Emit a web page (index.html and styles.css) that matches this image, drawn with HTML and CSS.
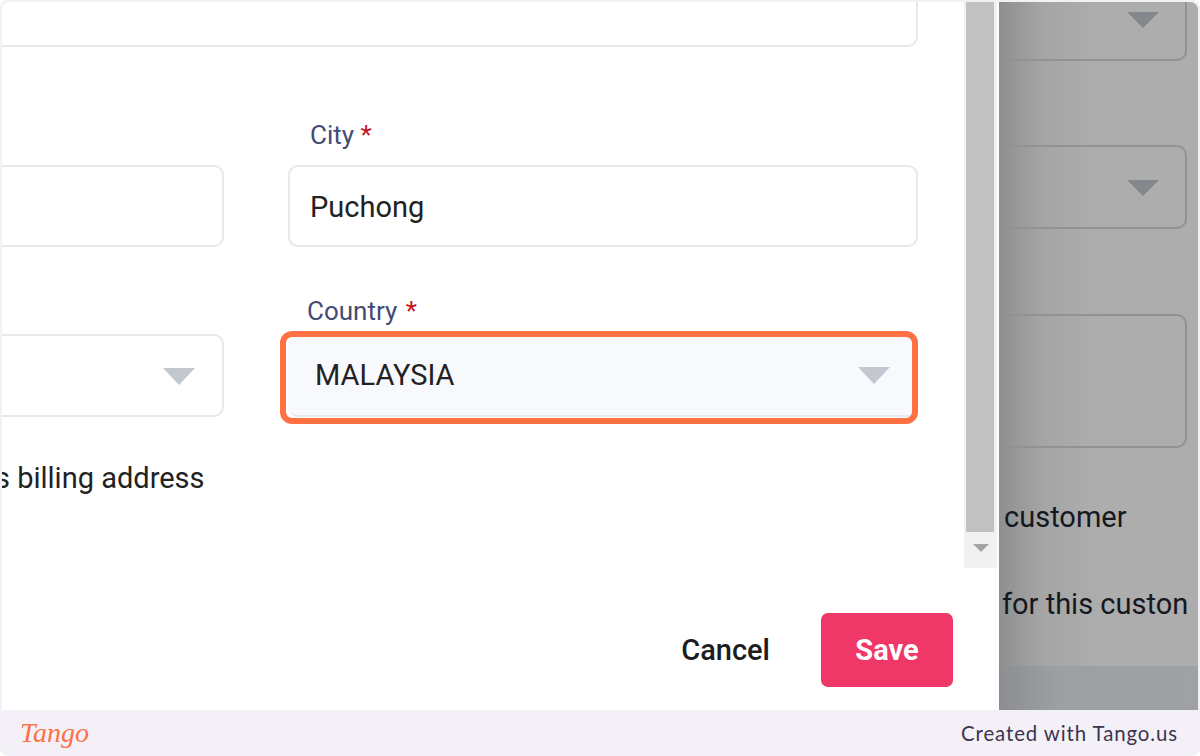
FILE: index.html
```html
<!DOCTYPE html>
<html lang="en">

<head>
    <meta charset="UTF-8">
    <meta name="viewport" content="width=device-width, initial-scale=1.0">
    <title>Edit address</title>
    <link rel="stylesheet" href="styles.css">
</head>

<body>
    <div class="shot">
        <div class="stage">
            <div class="modal">
                <div class="modal-body">
                    <div class="form">
                        <div class="input input-top"></div>

                        <div class="form-row row-city">
                            <div class="input input-cut"></div>
                            <div class="field">
                                <label class="field-label label-city">City <span class="req">*</span></label>
                                <div class="input">Puchong</div>
                            </div>
                        </div>

                        <div class="form-row row-country">
                            <div class="select select-cut"><span class="arrow"></span></div>
                            <div class="field">
                                <label class="field-label label-country">Country <span class="req">*</span></label>
                                <div class="select select-active">
                                    <span>MALAYSIA</span>
                                    <span class="arrow"></span>
                                    <div class="highlight"></div>
                                </div>
                            </div>
                        </div>

                        <p class="billing">s billing address</p>
                    </div>

                    <div class="scrollbar">
                        <div class="scroll-thumb"></div>
                        <div class="scroll-down"></div>
                    </div>
                </div>

                <div class="modal-footer">
                    <button class="cancel-button">Cancel</button>
                    <button class="save-button">Save</button>
                </div>
            </div>

            <div class="backdrop">
                <div class="back-content">
                    <div class="back-box box-one"><span class="back-arrow"></span></div>
                    <div class="back-box box-two"><span class="back-arrow"></span></div>
                    <div class="back-box box-three"></div>
                    <p class="back-text text-customer">customer</p>
                    <p class="back-text text-for">for this custon</p>
                </div>
                <div class="back-footer"></div>
            </div>
        </div>

        <div class="tango-bar">
            <span class="tango-logo">Tango</span>
            <span class="tango-credit">Created with Tango.us</span>
        </div>
    </div>
</body>

</html>
```

FILE: styles.css
```css
body {
    margin: 0;
    background-color: #fff;
    font-family: Roboto, Arial, sans-serif;
}

.shot {
    width: 1200px;
    height: 756px;
    background-color: #f3f1f7;
    border-radius: 8px;
    padding: 2px 2px 0 2px;
    box-sizing: border-box;
    overflow: hidden;
}

.stage {
    display: flex;
    height: 708px;
    border-radius: 8px 8px 0 0;
    overflow: hidden;
}

/* Modal */
.modal {
    flex: 0 0 997px;
    background-color: #fff;
    display: flex;
    flex-direction: column;
}

.modal-body {
    display: flex;
    height: 566px;
}

.form {
    flex: 0 0 962px;
    overflow: hidden;
}

.form-row {
    display: grid;
    grid-template-columns: 222px 630px;
    column-gap: 64px;
    align-items: end;
}

.row-city {
    margin-top: 73px;
}

.row-country {
    margin-top: 49px;
}

.field {
    display: flex;
    flex-direction: column;
}

.field-label {
    font-size: 26px;
    line-height: 30px;
    color: #434c74;
}

.label-city {
    margin: 0 0 15px 22px;
}

.label-country {
    margin: 0 0 8px 19px;
}

.req {
    color: #c2151f;
}

.label-country .req {
    margin-left: 2px;
}

.input {
    height: 82px;
    box-sizing: border-box;
    border: 2px solid #e8e8ea;
    border-radius: 10px;
    padding: 2px 0 0 20px;
    display: flex;
    align-items: center;
    font-size: 29px;
    color: #222;
}

.input-top {
    width: 916px;
    height: 45px;
    border-top: none;
    border-left: none;
    border-radius: 0 0 10px 0;
}

.input-cut {
    border-left: none;
    border-radius: 0 10px 10px 0;
}

.select {
    height: 83px;
    box-sizing: border-box;
    border: 2px solid #e8e8ea;
    border-radius: 10px;
    padding: 0 26px;
    display: flex;
    align-items: center;
    justify-content: space-between;
    font-size: 29px;
    color: #222;
    position: relative;
}

.select-cut {
    border-left: none;
    border-radius: 0 10px 10px 0;
    justify-content: flex-end;
    padding-right: 27px;
}

.select-active {
    background-color: #f8f9fd;
    border-color: #f8f9fd;
    border-bottom-color: #e8e9ec;
    padding: 0 26px 2px 25px;
}

.arrow {
    width: 0;
    height: 0;
    border-left: 16px solid transparent;
    border-right: 16px solid transparent;
    border-top: 17px solid #c3c7d0;
    margin-top: 2px;
}

.highlight {
    position: absolute;
    top: -5px;
    left: -10px;
    right: -2px;
    bottom: -9px;
    border: 6px solid #ff7043;
    border-radius: 12px;
}

.billing {
    margin: 44px 0 0 -7px;
    font-size: 29px;
    line-height: 34px;
    color: #222;
    white-space: nowrap;
}

/* Scrollbar */
.scrollbar {
    width: 33px;
    background-color: #f1f1f1;
    display: flex;
    flex-direction: column;
    align-items: center;
}

.scroll-thumb {
    width: 28px;
    height: 530px;
    background-color: #c1c1c1;
    margin-right: 1px;
}

.scroll-down {
    width: 0;
    height: 0;
    border-left: 8px solid transparent;
    border-right: 8px solid transparent;
    border-top: 8px solid #a3a3a3;
    margin-top: 12px;
}

/* Modal footer */
.modal-footer {
    flex: 1;
    display: flex;
    justify-content: flex-end;
    align-items: flex-start;
    padding: 45px 46px 0 0;
}

button {
    font-family: Roboto, Arial, sans-serif;
    font-size: 29px;
    font-weight: 500;
    border: none;
    cursor: pointer;
}

.cancel-button {
    height: 74px;
    padding: 0;
    margin-right: 51px;
    background: none;
    color: #1d1d1f;
}

.save-button {
    width: 132px;
    height: 74px;
    background-color: #ef3768;
    border-radius: 7px;
    color: #fff;
    font-weight: 700;
}

/* Page behind the modal */
.backdrop {
    flex: 1;
    min-width: 0;
    display: flex;
    flex-direction: column;
    background: linear-gradient(90deg, #8f8f8f, #a5a5a5 22%, #adadad 50%);
}

.back-content {
    flex: 1;
    padding-right: 11px;
    overflow: hidden;
}

.back-box {
    box-sizing: border-box;
    border: 2px solid #929292;
    border-left: none;
    border-radius: 0 10px 10px 0;
    display: flex;
    align-items: center;
    justify-content: flex-end;
    padding-right: 26px;
}

.box-one {
    height: 59px;
    border-top: none;
    border-radius: 0 0 10px 0;
    align-items: flex-start;
    padding-top: 10px;
}

.box-two {
    height: 84px;
    margin-top: 84px;
    padding-top: 2px;
}

.box-three {
    height: 134px;
    margin-top: 85px;
}

.back-arrow {
    width: 0;
    height: 0;
    border-left: 16px solid transparent;
    border-right: 16px solid transparent;
    border-top: 16px solid #84878c;
}

.back-text {
    margin: 0;
    font-size: 29px;
    line-height: 34px;
    color: #15181f;
    white-space: nowrap;
}

.text-customer {
    margin: 52px 0 0 5px;
}

.text-for {
    margin: 53px 0 0 3px;
}

.back-footer {
    height: 44px;
    background: linear-gradient(90deg, #8c8e91, #9ca0a3 30%, #9fa2a5);
}

/* Tango bar */
.tango-bar {
    height: 46px;
    display: flex;
    align-items: center;
    justify-content: space-between;
    padding: 0 20px 0 18px;
}

.tango-logo {
    font-family: "Liberation Serif", serif;
    font-style: italic;
    font-size: 28px;
    color: #ff7043;
}

.tango-credit {
    font-family: Lato, Arial, sans-serif;
    font-size: 20.4px;
    letter-spacing: 0.9px;
    line-height: 44px;
    color: #3d3450;
}
```
